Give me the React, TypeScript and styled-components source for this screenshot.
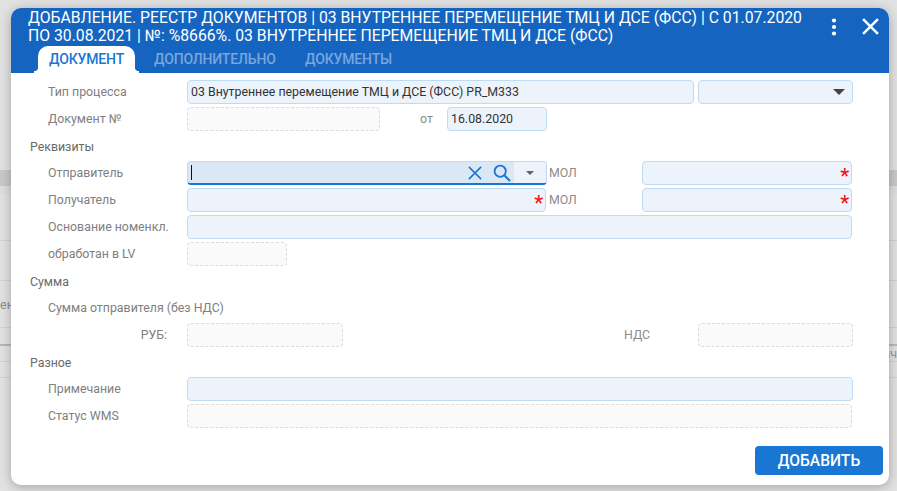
import React from 'react';
import styled, { createGlobalStyle } from 'styled-components';

const Global = createGlobalStyle`
  html, body { margin: 0; padding: 0; width: 897px; height: 491px; overflow: hidden; background: #e2e2e2; }
  * { box-sizing: border-box; }
  body { font-family: Roboto, "Liberation Sans", sans-serif; }
`;

const Page = styled.div`
  position: relative;
  width: 897px;
  height: 491px;
  overflow: hidden;
  background: #e2e2e2;
`;

const Backdrop = styled.div`
  display: flex;
  flex-direction: column;
  padding-top: 170px;
  height: 100%;
`;

const BackRow = styled.div<{ $h: number; $bg?: string; $line?: string; $lw?: number }>`
  display: flex;
  align-items: center;
  height: ${p => p.$h}px;
  background: ${p => p.$bg || 'transparent'};
  border-bottom: ${p => p.$lw || 1}px solid ${p => p.$line || 'transparent'};
  font-size: 12.5px;
  color: #8d8d8d;
`;

const RightText = styled.span`
  margin-left: auto;
  color: #8a9bad;
  white-space: nowrap;
`;

const Dialog = styled.div`
  position: absolute;
  left: 11px;
  top: 8px;
  width: 878px;
  height: 477px;
  background: #fff;
  border-radius: 10px;
  box-shadow: 0 2px 12px rgba(0, 0, 0, 0.28);
  display: flex;
  flex-direction: column;
  overflow: hidden;
`;

const Header = styled.div`
  height: 65px;
  flex: none;
  background: #1565c0;
  display: flex;
  flex-direction: column;
  padding-left: 17px;
`;

const TitleBar = styled.div`
  display: flex;
  height: 38px;
  flex: none;
`;

const Title = styled.div`
  width: 790px;
  color: #fff;
  font-size: 15.75px;
  line-height: 18px;
  padding-top: 1px;
  white-space: pre-line;
`;

const Actions = styled.div`
  margin-left: auto;
  display: flex;
  align-items: flex-start;
  gap: 25px;
  padding: 10px 10px 0 0;
`;

const IconButton = styled.div`
  display: flex;
  line-height: 0;
`;

const Tabs = styled.div`
  display: flex;
  height: 27px;
  margin-left: 10px;
`;

const Tab = styled.div<{ $active?: boolean; $w: number }>`
  position: relative;
  width: ${p => p.$w}px;
  height: 27px;
  padding-top: 5px;
  padding-left: ${p => (p.$active ? 11 : 19)}px;
  font-size: 14px;
  line-height: 17px;
  font-weight: 500;
  color: ${p => (p.$active ? '#1976d2' : '#79a6dd')};
  background: ${p => (p.$active ? '#fff' : 'transparent')};
  border-radius: 10px 10px 0 0;
  letter-spacing: -0.14px;
  white-space: nowrap;

  ${p =>
    p.$active
      ? `
  &::before, &::after {
    content: '';
    position: absolute;
    bottom: 0;
    width: 4px;
    height: 6px;
  }
  &::before {
    left: -4px;
    background: radial-gradient(circle at 0 0, transparent 4px, #fff 4.5px);
  }
  &::after {
    right: -4px;
    background: radial-gradient(circle at 100% 0, transparent 4px, #fff 4.5px);
  }`
      : ''}
`;

const Form = styled.div`
  display: flex;
  flex-direction: column;
  padding: 7px 32px 0 19px;
  flex: 1;
`;

const Rows = styled.div`
  display: flex;
  flex-direction: column;
  gap: 3px;
`;

const Heading = styled.div`
  height: 16px;
  margin: 8px 0 6px;
  font-size: 12.35px;
  line-height: 16px;
  color: #6a6a6a;
`;

const Row = styled.div`
  display: flex;
  align-items: center;
  height: 24px;
`;

const Label = styled.div<{ $w?: number; $right?: boolean }>`
  flex: none;
  width: ${p => p.$w ?? 157}px;
  padding-left: ${p => (p.$right ? 0 : 18)}px;
  padding-right: ${p => (p.$right ? 20 : 0)}px;
  text-align: ${p => (p.$right ? 'right' : 'left')};
  font-size: 12.35px;
  line-height: 16px;
  color: #808080;
  white-space: nowrap;
`;

const PlainLabel = styled.div<{ $w: number; $ml?: number }>`
  flex: none;
  width: ${p => p.$w}px;
  margin-left: ${p => p.$ml || 0}px;
  font-size: 12.35px;
  color: #8c8c8c;
`;

const Field = styled.div<{ $w: number; $ml?: number }>`
  flex: none;
  display: flex;
  align-items: center;
  justify-content: space-between;
  width: ${p => p.$w}px;
  height: 24px;
  margin-left: ${p => p.$ml || 0}px;
  padding: 0 2px 0 3px;
  background: #ecf3fb;
  border: 1px solid #bfdaf3;
  border-radius: 4px;
  font-size: 12.35px;
  color: #333;
  white-space: nowrap;
`;

const ReadOnly = styled.div<{ $w: number; $ml?: number }>`
  flex: none;
  width: ${p => p.$w}px;
  height: 24px;
  margin-left: ${p => p.$ml || 0}px;
  background: #fafafa;
  border: 1px dashed #dcdcdc;
  border-radius: 4px;
`;

const Required = styled.span`
  margin-left: auto;
  margin-top: -1px;
  color: #f01818;
  font-size: 20px;
  font-weight: 500;
  line-height: 20px;
  height: 14px;
`;

const FocusField = styled.div`
  flex: none;
  display: flex;
  align-items: stretch;
  width: 360px;
  height: 24px;
  background: #dae8f6;
  border-top: 1px solid #bfdaf3;
  border-bottom: 2px solid #1976d2;
  border-left: 1px solid #bfdaf3;
  border-right: 1px solid #bfdaf3;
  border-radius: 4px;
  overflow: hidden;
`;

const Caret = styled.span`
  width: 1px;
  height: 15px;
  margin: 3px 0 0 3px;
  background: #111;
`;

const FocusIcons = styled.div`
  margin-left: auto;
  display: flex;
  align-items: center;
  gap: 11px;
  padding-right: 3px;
`;

const DropZone = styled.div`
  width: 32px;
  display: flex;
  align-items: center;
  justify-content: center;
  background: #ecf3fb;
`;

const Arrow = styled.span<{ $w: number; $h: number; $color: string }>`
  width: 0;
  height: 0;
  border-left: ${p => p.$w}px solid transparent;
  border-right: ${p => p.$w}px solid transparent;
  border-top: ${p => p.$h}px solid ${p => p.$color};
`;

const SelectArrow = styled.span`
  margin: 0 5px 0 auto;
  display: flex;
`;

const Footer = styled.div`
  display: flex;
  justify-content: flex-end;
  padding: 0 6px 10px 0;
`;

const AddButton = styled.button`
  width: 128px;
  height: 29px;
  border: none;
  border-radius: 4px;
  background: #1976d2;
  color: #fff;
  font-family: Roboto, "Liberation Sans", sans-serif;
  font-size: 15.6px;
  font-weight: 500;
  padding: 0;
`;

const Kebab = () => (
  <svg width="6" height="18" viewBox="0 0 6 18">
    <circle cx="3" cy="2.5" r="2.1" fill="#fff" />
    <circle cx="3" cy="9" r="2.1" fill="#fff" />
    <circle cx="3" cy="15.5" r="2.1" fill="#fff" />
  </svg>
);

const Cross = ({ size, color, w }: { size: number; color: string; w: number }) => (
  <svg width={size} height={size} viewBox="0 0 16 16">
    <path d="M1 1 L15 15 M15 1 L1 15" stroke={color} strokeWidth={w} fill="none" />
  </svg>
);

const SearchIcon = () => (
  <svg width="18" height="18" viewBox="0 0 18 18">
    <circle cx="7.2" cy="7.2" r="5.6" stroke="#1976d2" strokeWidth="1.8" fill="none" />
    <path d="M11.3 11.3 L17 17" stroke="#1976d2" strokeWidth="2" fill="none" />
  </svg>
);

export default function App() {
  return (
    <Page>
      <Global />
      <Backdrop>
        <BackRow $h={16} $bg="#c9c9c9" />
        <BackRow $h={9} $bg="#dcdfe2" />
        <BackRow $h={46} $line="#d2d2d2" />
        <BackRow $h={40} $line="#d2d2d2" />
        <BackRow $h={47} $line="#d2d2d2">ен</BackRow>
        <BackRow $h={18} $line="#b8b8b8" $lw={2} />
        <BackRow $h={16} $line="#d2d2d2"><RightText>ич</RightText></BackRow>
        <BackRow $h={16} $line="#d2d2d2" />
      </Backdrop>
      <Dialog>
        <Header>
          <TitleBar>
            <Title>{'ДОБАВЛЕНИЕ. РЕЕСТР ДОКУМЕНТОВ | 03 ВНУТРЕННЕЕ ПЕРЕМЕЩЕНИЕ ТМЦ И ДСЕ (ФСС) | С 01.07.2020\nПО 30.08.2021 | №: %8666%. 03 ВНУТРЕННЕЕ ПЕРЕМЕЩЕНИЕ ТМЦ И ДСЕ (ФСС)'}</Title>
            <Actions>
              <IconButton><Kebab /></IconButton>
              <IconButton><Cross size={17} color="#fff" w={2.4} /></IconButton>
            </Actions>
          </TitleBar>
          <Tabs>
            <Tab $active $w={97}>ДОКУМЕНТ</Tab>
            <Tab $w={151}>ДОПОЛНИТЕЛЬНО</Tab>
            <Tab $w={120}>ДОКУМЕНТЫ</Tab>
          </Tabs>
        </Header>
        <Form>
          <Rows>
            <Row>
              <Label>Тип процесса</Label>
              <Field $w={507}>03 Внутреннее перемещение ТМЦ и ДСЕ (ФСС) PR_M333</Field>
              <Field $w={155} $ml={4}>
                <SelectArrow><Arrow $w={6} $h={6} $color="#444" /></SelectArrow>
              </Field>
            </Row>
            <Row>
              <Label>Документ №</Label>
              <ReadOnly $w={193} />
              <PlainLabel $w={27} $ml={40}>от</PlainLabel>
              <Field $w={100}>16.08.2020</Field>
            </Row>
          </Rows>
          <Heading>Реквизиты</Heading>
          <Rows>
            <Row>
              <Label>Отправитель</Label>
              <FocusField>
                <Caret />
                <FocusIcons>
                  <Cross size={14} color="#1976d2" w={1.8} />
                  <SearchIcon />
                </FocusIcons>
                <DropZone><Arrow $w={4.5} $h={4} $color="#616161" /></DropZone>
              </FocusField>
              <PlainLabel $w={93} $ml={2}>МОЛ</PlainLabel>
              <Field $w={210}><Required>*</Required></Field>
            </Row>
            <Row>
              <Label>Получатель</Label>
              <Field $w={359}><Required>*</Required></Field>
              <PlainLabel $w={93} $ml={3}>МОЛ</PlainLabel>
              <Field $w={210}><Required>*</Required></Field>
            </Row>
            <Row>
              <Label>Основание номенкл.</Label>
              <Field $w={665} />
            </Row>
            <Row>
              <Label>обработан в LV</Label>
              <ReadOnly $w={100} />
            </Row>
          </Rows>
          <Heading>Сумма</Heading>
          <Rows>
            <Row>
              <Label $w={260}>Сумма отправителя (без НДС)</Label>
            </Row>
            <Row>
              <Label $right>РУБ:</Label>
              <ReadOnly $w={156} />
              <PlainLabel $w={74} $ml={281}>НДС</PlainLabel>
              <ReadOnly $w={155} />
            </Row>
          </Rows>
          <Heading>Разное</Heading>
          <Rows>
            <Row>
              <Label>Примечание</Label>
              <Field $w={666} />
            </Row>
            <Row>
              <Label>Статус WMS</Label>
              <ReadOnly $w={665} />
            </Row>
          </Rows>
        </Form>
        <Footer>
          <AddButton>ДОБАВИТЬ</AddButton>
        </Footer>
      </Dialog>
    </Page>
  );
}
